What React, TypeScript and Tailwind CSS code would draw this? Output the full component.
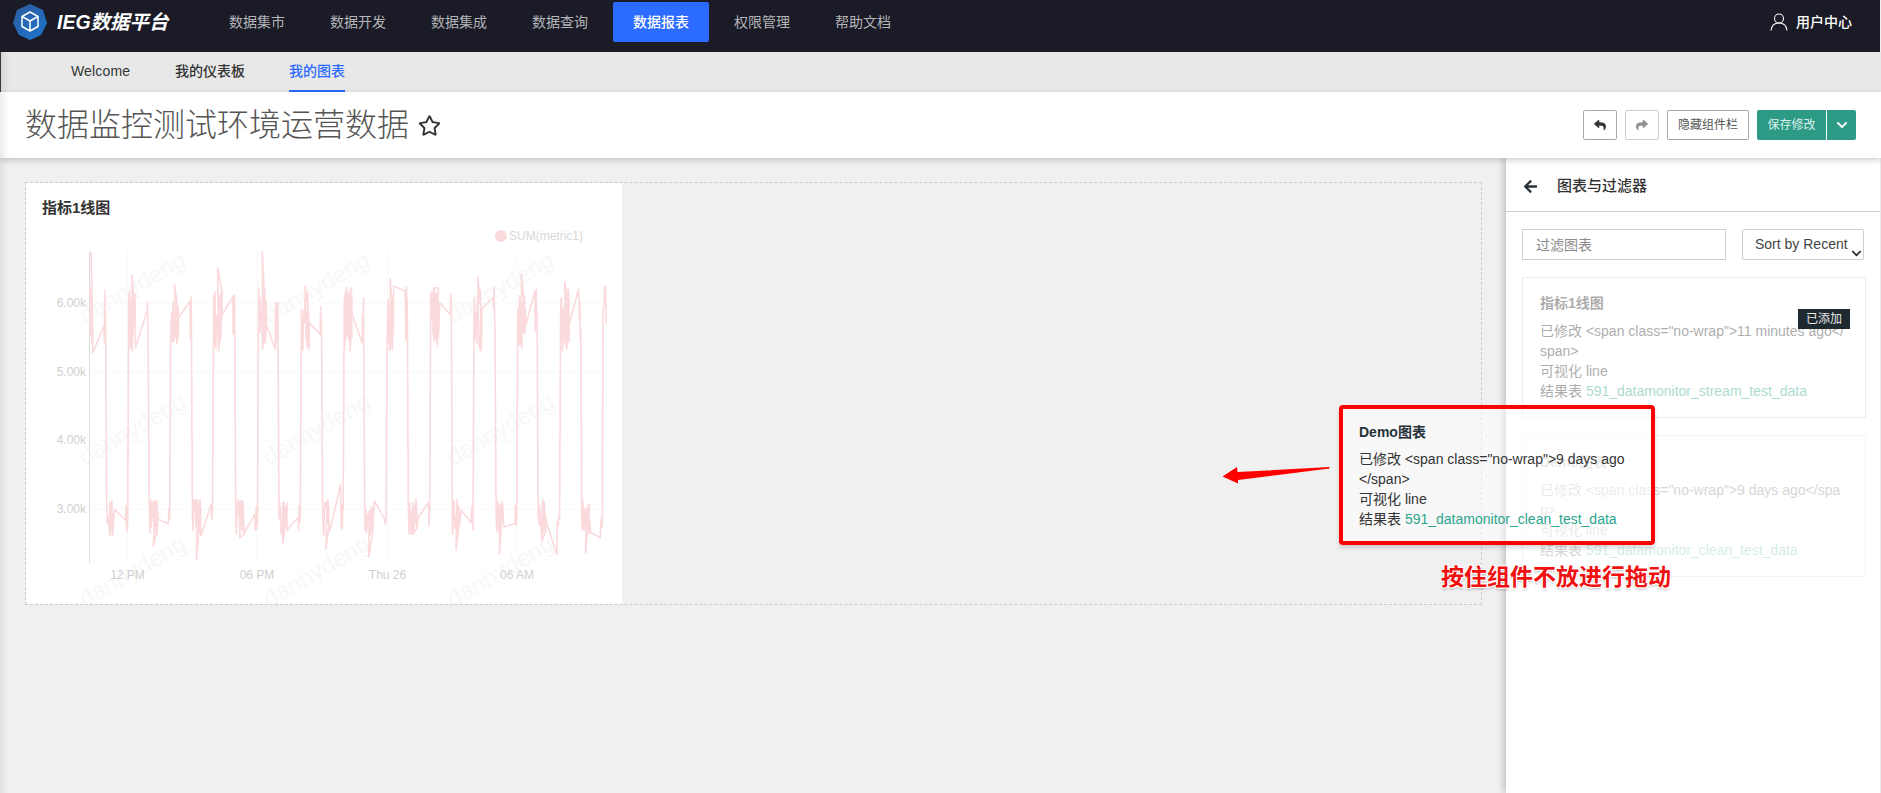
import { FaArrowLeft, FaChevronDown, FaRegStar, FaReply, FaShare } from "react-icons/fa";

const cjk = "font-['Liberation_Sans','Noto_Sans_CJK_SC',sans-serif]";

const navItems = ["数据集市", "数据开发", "数据集成", "数据查询", "数据报表", "权限管理", "帮助文档"];

// [xStart, xEnd, noiseEnd, slantX1, slantY1, slantX2, slantY2, peak] measured on a 2.45 / 3 scaled crop
const highSegs = [
  [217, 258, 225, 225, 545, 252, 465, 245],
  [312, 362, 330, 332, 520, 358, 420, 312],
  [415, 468, 435, 435, 440, 463, 390, 340],
  [520, 574, 542, 542, 430, 568, 378, 290],
  [630, 680, 650, 650, 460, 672, 535, 240],
  [735, 787, 755, 755, 455, 782, 490, 345],
  [840, 890, 860, 860, 430, 885, 515, 372],
  [945, 997, 962, 962, 345, 990, 360, 322],
  [1052, 1105, 1072, 1075, 395, 1100, 430, 350],
  [1158, 1212, 1178, 1178, 415, 1205, 380, 318],
  [1265, 1315, 1285, 1285, 465, 1308, 360, 308],
  [1370, 1422, 1392, 1392, 460, 1415, 355, 332],
];

const lowSegs = [
  [258, 312, 275, 278, 1015, 305, 1048, 1085],
  [362, 415, 385, 385, 1045, 410, 1058, 1125],
  [468, 520, 490, 490, 1095, 515, 1000, 1168],
  [574, 630, 596, 596, 1085, 622, 1030, 1100],
  [680, 735, 702, 702, 1075, 728, 1040, 1120],
  [787, 840, 805, 808, 1070, 832, 940, 1135],
  [890, 945, 912, 915, 990, 940, 1045, 1158],
  [997, 1052, 1020, 1022, 1040, 1047, 995, 1090],
  [1105, 1158, 1125, 1128, 1018, 1152, 1055, 1135],
  [1212, 1265, 1230, 1232, 1068, 1258, 1058, 1150],
  [1315, 1370, 1335, 1338, 1060, 1362, 1150, 1110],
  [1422, 1475, 1442, 1445, 1085, 1468, 1100, 1145],
];

function makeLine() {
  let seed = 591;
  const rnd = () => {
    seed = (seed * 16807) % 2147483647;
    return seed / 2147483647;
  };
  const pts: string[] = [];
  const add = (x: number, y: number) => pts.push(`${(x / 2.45).toFixed(1)},${(y / 3 + 170).toFixed(1)}`);

  const noise = (from: number, to: number, lo: number, hi: number) => {
    for (let x = from; x < to; x += 1.1) {
      add(x, lo + rnd() * (hi - lo));
    }
  };

  const all = [...highSegs.map((s) => ({ s, hi: true })), ...lowSegs.map((s) => ({ s, hi: false }))].sort(
    (a, b) => a.s[0] - b.s[0],
  );

  for (const { s, hi } of all) {
    const [x0, x1, nEnd, sx1, sy1, sx2, sy2, peak] = s;
    const lo = hi ? 350 : 985;
    const up = hi ? 540 : 1095;
    noise(x0 + 1, nEnd, lo, up);
    // the extreme of this stretch
    add(x0 + (nEnd - x0) * 0.5, peak);
    noise(x0 + (nEnd - x0) * 0.55, nEnd, lo, up);
    add(sx1, sy1);
    add(sx2, sy2);
    noise(sx2 + 1, x1 - 1, hi ? 340 : 1000, hi ? 520 : 1080);
  }
  for (let x = 1475; x < 1484; x += 1.2) add(x, 330 + rnd() * 150);
  return pts.join(" ");
}

const linePoints = makeLine();

function LineChart() {
  const marks = [84, 268, 452];
  const rows = [323, 465, 607];
  const grid = [
    [302, "6.00k"],
    [371, "5.00k"],
    [439, "4.00k"],
    [508, "3.00k"],
  ] as const;
  const ticks = [
    [126.5, "12 PM"],
    [256, "06 PM"],
    [386.5, "Thu 26"],
    [516, "06 AM"],
  ] as const;

  return (
    <svg viewBox="25 182 597 423" className="w-[597px] h-[423px] absolute left-0 top-0">
      {rows.map((y) =>
        marks.map((x) => (
          <text
            key={`${x}-${y}`}
            x={x}
            y={y}
            transform={`rotate(-30 ${x} ${y})`}
            fontSize="24"
            fontFamily="Liberation Sans"
            fill="#f8f8f8"
          >
            dannydeng
          </text>
        )),
      )}
      {grid.map(([y, label]) => (
        <g key={label}>
          <line x1="88.5" x2="606" y1={y} y2={y} stroke="#f8f8f8" />
          <text x="85" y={y + 4} textAnchor="end" fontSize="12" fontFamily="Liberation Sans" fill="#d0d0d0">
            {label}
          </text>
        </g>
      ))}
      {ticks.map(([x, label]) => (
        <g key={label}>
          <line x1={x} x2={x} y1="250" y2="562" stroke="#f8f8f8" />
          <text x={x} y="578" textAnchor="middle" fontSize="12" fontFamily="Liberation Sans" fill="#d0d0d0">
            {label}
          </text>
        </g>
      ))}
      <line x1="88.5" x2="88.5" y1="250" y2="562" stroke="#dcdcdc" />
      <polyline points={linePoints} fill="none" stroke="#fbdadd" strokeWidth="1.6" strokeLinejoin="round" />
      <circle cx="500" cy="235" r="6" fill="#fbdadd" />
      <text x="508" y="239" fontSize="12" fontFamily="Liberation Sans" fill="#d8d8d8">
        SUM(metric1)
      </text>
    </svg>
  );
}

function Logo() {
  return (
    <svg width="36" height="38" viewBox="0 0 36 38" className="shrink-0">
      <defs>
        <linearGradient id="logoBlue" x1="0" y1="0" x2="0.6" y2="1">
          <stop offset="0" stopColor="#2d5b9e" />
          <stop offset="1" stopColor="#1f72c9" />
        </linearGradient>
      </defs>
      <path d="M18 1 L31 7 L35 20 L29 32 L18 37 L7 32 L1 20 L5 7 Z" fill="url(#logoBlue)" />
      <path
        d="M18 9 L26 13.5 V23.5 L18 28 L10 23.5 V13.5 Z M10 13.5 L18 18 L26 13.5 M18 18 V28"
        fill="none"
        stroke="#fff"
        strokeWidth="1.5"
        strokeLinejoin="round"
      />
    </svg>
  );
}

export default function App() {
  return (
    <div className={`relative h-[793px] w-[1881px] overflow-hidden bg-[#f0f0f0] ${cjk}`}>
      {/* top nav */}
      <div className="h-[52px] w-[1880px] bg-[#1a1b26] flex items-start">
        <div className="flex items-center pl-[12px] pt-[3px] w-[209px]">
          <Logo />
          <span className="ml-[9px] text-[19.5px] leading-[38px] font-bold italic text-white whitespace-nowrap">IEG数据平台</span>
        </div>
        <div className="flex gap-[5px] pt-[2px]">
          {navItems.map((item) => (
            <div
              key={item}
              className={
                item === "数据报表"
                  ? "w-[96px] h-[40px] rounded-[2px] bg-[#2b6bff] text-white text-[14px] leading-[40px] text-center font-medium"
                  : "w-[96px] h-[40px] text-[#b4b5b9] text-[14px] leading-[40px] text-center"
              }
            >
              {item}
            </div>
          ))}
        </div>
        <div className="ml-auto mr-[28px] h-[44px] flex items-center text-white">
          <svg width="18" height="18" viewBox="0 0 18 18" fill="none" stroke="#fff" strokeWidth="1.1">
            <circle cx="9" cy="5.5" r="4.5" />
            <path d="M1 17.5 C1.5 12.5 5 10 9 10 C13 10 16.5 12.5 17 17.5" />
          </svg>
          <span className="ml-[8px] text-[14px] font-medium">用户中心</span>
        </div>
      </div>

      {/* sub nav */}
      <div className="h-[40px] border-l border-[#3a3a3a] bg-[#e8e8e8] flex pl-[70px] gap-[44px] text-[14px] leading-[38px] shadow-[inset_14px_0_10px_-12px_rgba(0,0,0,0.12)]">
        <div className="w-[60px] text-[#333] tracking-[0.15px]">Welcome</div>
        <div className="text-[#333] font-medium">我的仪表板</div>
        <div className="text-[#2b6bff] font-medium border-b-2 border-[#2b6bff] h-[40px]">我的图表</div>
      </div>

      {/* page title */}
      <div className="relative z-10 h-[66px] bg-white flex items-center pl-[25px] pr-[25px] shadow-[0_2px_6px_rgba(0,0,0,0.2),inset_14px_0_10px_-12px_rgba(0,0,0,0.12)]">
        <h1 className="text-[32px] leading-[44px] font-light text-[#555]">数据监控测试环境运营数据</h1>
        <FaRegStar className="ml-[9px] text-[23px] text-[#333]" />
        <div className="ml-auto flex items-center gap-[8px]">
          <button className="w-[34px] h-[30px] border border-[#a8a8a8] rounded-[2px] flex items-center justify-center text-[#333]">
            <FaReply className="text-[12px]" />
          </button>
          <button className="w-[34px] h-[30px] border border-[#cfcfcf] rounded-[2px] flex items-center justify-center text-[#8f8f8f]">
            <FaShare className="text-[12px]" />
          </button>
          <button className="w-[82px] h-[30px] border border-[#a8a8a8] rounded-[2px] text-[12px] text-[#555]">隐藏组件栏</button>
          <div className="flex h-[30px] rounded-[2px] overflow-hidden bg-[#2d9a85]">
            <button className="w-[70px] text-[12px] text-[#d9f0ea] border-r border-white">保存修改</button>
            <button className="w-[29px] flex items-center justify-center text-white">
              <FaChevronDown className="text-[12px]" />
            </button>
          </div>
        </div>
      </div>

      {/* body */}
      <div className="flex h-[635px]">
        <div className="w-[1506px] shrink-0 pl-[25px] pr-[24px] pt-[24px] shadow-[inset_14px_0_10px_-12px_rgba(0,0,0,0.1)]">
          <div className="relative h-[423px] border border-dashed border-[#c4cdd0]">
            <div className="w-[596px] h-[421px] relative bg-white overflow-hidden">
              <LineChart />
              <h3 className="absolute left-[16px] top-[15px] text-[15px] leading-[20px] font-bold text-[#333]">指标1线图</h3>
            </div>
          </div>
        </div>

        <div className="flex-1 bg-white shadow-[-3px_0_6px_rgba(0,0,0,0.18)] mr-px">
          <div className="h-[54px] border-b border-[#c9d1d6] flex items-center pl-[17px] pt-[3px]">
            <FaArrowLeft className="text-[15px] text-[#263238]" />
            <span className="ml-[19px] text-[15px] font-medium text-[#333]">图表与过滤器</span>
          </div>
          <div className="flex pl-[16px] pt-[17px]">
            <input
              placeholder="过滤图表"
              className="w-[204px] h-[31px] border border-[#c9d1d6] px-[13px] text-[14px] placeholder:text-[#8a8a8a] outline-none"
            />
            <div className="relative ml-[16px] w-[122px] h-[31px] border border-[#c9d1d6] rounded-[2px] pl-[12px] text-[14px] leading-[29px] text-[#444]">
              Sort by Recent
              <FaChevronDown className="absolute right-[1px] bottom-[0px] text-[11px] text-[#333]" />
            </div>
          </div>

          <div className="relative ml-[16px] mt-[17px] w-[344px] h-[141px] border border-[#e8ecee] px-[17px] pt-[15px] text-[14px] leading-[20px]">
            <div className="opacity-40 text-[#333]">
              <div className="font-bold mb-[8px]">指标1线图</div>
              <div>
                已修改 &lt;span class="no-wrap"&gt;11 minutes ago&lt;/
                <br />
                span&gt;
                <br />
                可视化 line
                <br />
                结果表 <span className="text-[#2ca58d]">591_datamonitor_stream_test_data</span>
              </div>
            </div>
            <div className="absolute right-[15px] top-[31px] w-[52px] h-[20px] bg-[#1f2a30] text-[#e8e8e8] text-[12px] leading-[20px] text-center">已添加</div>
          </div>

          <div className="ml-[16px] mt-[17px] w-[344px] h-[142px] border border-[#f3f5f6] px-[17px] pt-[16px] text-[14px] leading-[20px]">
            <div className="opacity-20 text-[#333]">
              <div className="font-bold mb-[8px]">Demo图表</div>
              <div>
                已修改 &lt;span class="no-wrap"&gt;9 days ago&lt;/spa
                <br />
                n&gt;
                <br />
                可视化 line
                <br />
                结果表 <span className="text-[#2ca58d]">591_datamonitor_clean_test_data</span>
              </div>
            </div>
          </div>
        </div>
      </div>

      {/* dragged card with annotation */}
      <div className="absolute left-[1339px] top-[405px] w-[316px] h-[140px] border-4 border-[#ff0000] rounded-[4px] bg-white/50 pl-[16px] pt-[13px] text-[14px] leading-[20px] text-[#333] shadow-[0_3px_4px_rgba(0,0,0,0.15)]">
        <div className="font-bold mb-[7px] text-[#263238]">Demo图表</div>
        <div>
          已修改 &lt;span class="no-wrap"&gt;9 days ago
          <br />
          &lt;/span&gt;
          <br />
          可视化 line
          <br />
          结果表 <span className="text-[#2ca58d]">591_datamonitor_clean_test_data</span>
        </div>
      </div>
      <svg className="absolute left-[1215px] top-[460px]" width="120" height="30" viewBox="1215 460 120 30">
        <polygon points="1222.5,476.5 1237,467 1237.5,472 1329.5,467 1329.5,468.5 1238,480 1238,483.5" fill="#ff0000" />
      </svg>
      <div className="absolute left-[1441px] top-[561px] text-[23px] leading-[32px] font-bold text-[#f01010] whitespace-nowrap [text-shadow:1px_1px_0_#fff,-1px_-1px_0_#fff,1px_-1px_0_#fff,-1px_1px_0_#fff,0_2px_3px_rgba(0,0,0,0.3)]">
        按住组件不放进行拖动
      </div>
    </div>
  );
}
